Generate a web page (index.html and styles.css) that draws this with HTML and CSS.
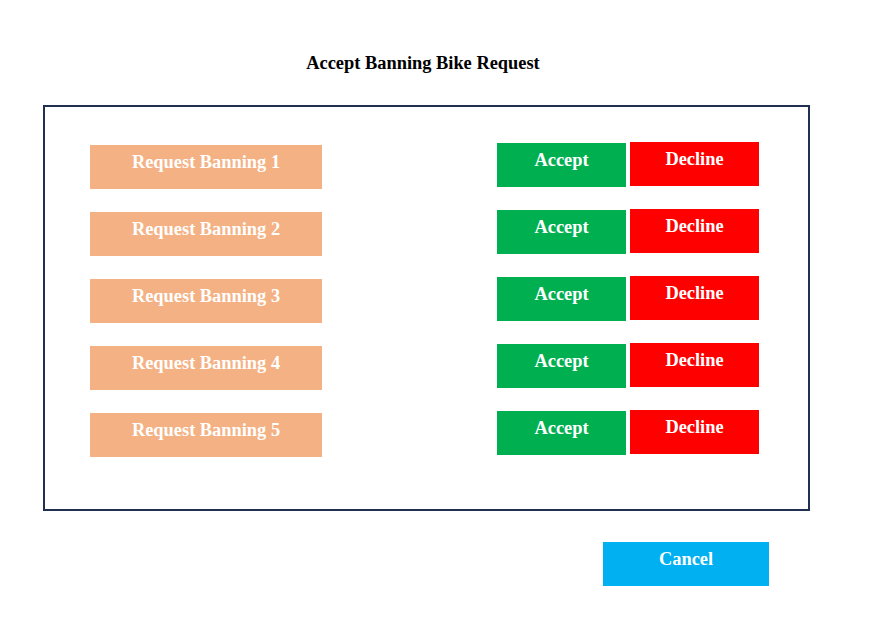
FILE: index.html
```html
<!DOCTYPE html>
<html lang="en">
<head>
<meta charset="utf-8">
<title>Accept Banning Bike Request</title>
<link rel="stylesheet" href="styles.css">
</head>
<body>
  <h1 class="title">Accept Banning Bike Request</h1>
  <section class="panel">
    <div class="row">
      <div class="request">Request Banning 1</div>
      <div class="actions">
        <button class="btn accept">Accept</button>
        <button class="btn decline">Decline</button>
      </div>
    </div>
    <div class="row">
      <div class="request">Request Banning 2</div>
      <div class="actions">
        <button class="btn accept">Accept</button>
        <button class="btn decline">Decline</button>
      </div>
    </div>
    <div class="row">
      <div class="request">Request Banning 3</div>
      <div class="actions">
        <button class="btn accept">Accept</button>
        <button class="btn decline">Decline</button>
      </div>
    </div>
    <div class="row">
      <div class="request">Request Banning 4</div>
      <div class="actions">
        <button class="btn accept">Accept</button>
        <button class="btn decline">Decline</button>
      </div>
    </div>
    <div class="row">
      <div class="request">Request Banning 5</div>
      <div class="actions">
        <button class="btn accept">Accept</button>
        <button class="btn decline">Decline</button>
      </div>
    </div>
  </section>
  <div class="footer">
    <button class="btn cancel">Cancel</button>
  </div>
</body>
</html>
```

FILE: styles.css
```css
* {
  box-sizing: border-box;
}

body {
  margin: 0;
  background: #ffffff;
  font-family: "Liberation Serif", "Times New Roman", serif;
  font-weight: bold;
  font-size: 18.4px;
  line-height: 21px;
}

.title {
  margin: 0;
  padding-top: 53px;
  height: 105px;
  font-size: 18.4px;
  line-height: 21px;
  font-weight: bold;
  color: #000000;
  text-align: center;
  padding-right: 26px;
}

.panel {
  margin-left: 43px;
  width: 767px;
  height: 406px;
  border: 2px solid #1f3050;
  padding: 37px 0 0 45px;
  display: flex;
  flex-direction: column;
  gap: 22px;
}

.row {
  display: flex;
  align-items: flex-start;
}

.request {
  margin-top: 1px;
  width: 232px;
  height: 44px;
  padding-top: 7px;
  background: #f4b183;
  color: #ffffff;
  text-align: center;
}

.actions {
  display: flex;
  gap: 4px;
  margin-left: 175px;
  margin-top: -1px;
}

.btn {
  border: none;
  margin: 0;
  width: 129px;
  height: 44px;
  padding: 7px 0 16px;
  display: block;
  font: inherit;
  line-height: 21px;
  color: #ffffff;
  text-align: center;
  align-self: flex-start;
}

.accept {
  background: #00b050;
}

.decline {
  background: #ff0000;
  margin-top: -1px;
}

.footer {
  margin-left: 43px;
  width: 767px;
  margin-top: 31px;
  display: flex;
  justify-content: flex-end;
  padding-right: 41px;
}

.cancel {
  width: 166px;
  background: #00b0f0;
}
```
